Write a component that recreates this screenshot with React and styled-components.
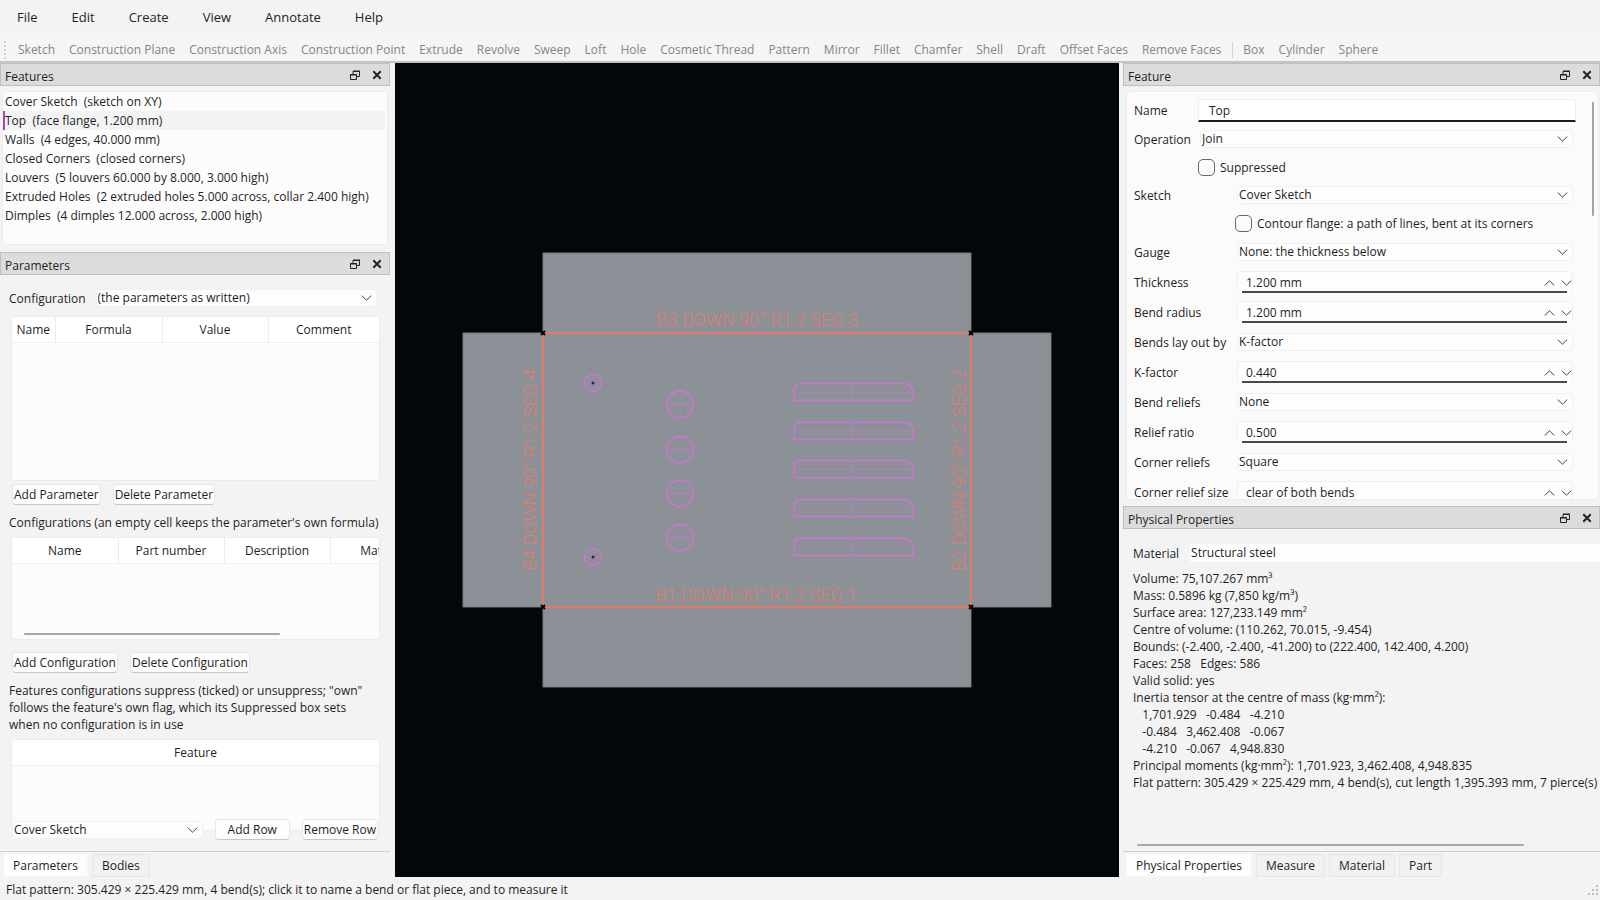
import React, { useState } from 'react';
import styled, { createGlobalStyle } from 'styled-components';

const GlobalStyle = createGlobalStyle`
  * { box-sizing: border-box; }
  body {
    margin: 0;
    background: #f3f3f3;
    color: #1f1f1f;
    font-family: 'Open Sans', 'Noto Sans', sans-serif;
    font-size: 12px;
    line-height: 17px;
  }
  button, input, select {
    font: inherit;
    color: inherit;
    margin: 0;
  }
`;

const Window = styled.div`
  display: flex;
  flex-direction: column;
  height: 100vh;
  min-height: 760px;
  overflow: hidden;
`;

const MenuBar = styled.nav`
  display: flex;
  gap: 34px;
  align-items: center;
  height: 35px;
  padding: 0 17px;
`;

const MenuButton = styled.button`
  background: none;
  border: none;
  padding: 0;
  font-size: 13px;
`;

const ToolBar = styled.div`
  display: flex;
  align-items: center;
  gap: 14px;
  height: 28px;
  padding: 2px 0 0 4px;
  background: #f5f5f5;
  border-top: 1px solid #f8f8f8;
  border-bottom: 2px solid #c3c3c3;
  white-space: nowrap;
`;

const ToolButton = styled.button`
  background: none;
  border: none;
  padding: 0;
  color: #858585;
`;

const ToolHandle = styled.span`
  width: 0;
  height: 18px;
  border-left: 2px dotted #d4d4d4;
  margin-right: -2px;
`;

const ToolSeparator = styled.span`
  width: 1px;
  height: 16px;
  background: #d6d6d6;
  margin: 0 -4px 0 -3px;
`;

const Main = styled.main`
  flex: 1;
  min-height: 0;
  display: grid;
  grid-template-columns: 390px minmax(0, 1fr) 477px;
`;

const DockArea = styled.div`
  display: flex;
  flex-direction: column;
  min-width: 0;
  min-height: 0;
`;

const Dock = styled.section`
  display: flex;
  flex-direction: column;
  min-height: 0;
  flex: ${props => props.$grow ? '1 1 0' : '0 0 auto'};
`;

const DockTitle = styled.header`
  display: flex;
  align-items: center;
  flex: none;
  height: 23px;
  padding: 3px 7px 0 4px;
  background: #dcdcdc;
  border: 1px solid #bfbfbf;
`;

const DockName = styled.h2`
  flex: 1;
  margin: 0;
  font-size: 12px;
  font-weight: 400;
`;

const TitleButton = styled.button`
  display: flex;
  background: none;
  border: none;
  padding: 0 0 2px;
  margin-left: 12px;
`;

const FeatureList = styled.ul`
  list-style: none;
  margin: 5px 2px 7px;
  padding: 0;
  height: 154px;
  background: #fcfcfc;
  border: 1px solid #ececec;
  border-radius: 4px;
`;

const FeatureItem = styled.li`
  height: 19px;
  line-height: 19px;
  padding-left: ${props => props.$selected ? '0' : '2px'};
  margin-right: 2px;
  white-space: pre;
  background: ${props => props.$selected ? '#f3f3f3' : 'none'};
  border-left: ${props => props.$selected ? '2px solid #a349b8' : 'none'};
`;

const ParamBody = styled.div`
  flex: 1;
  min-height: 0;
  display: flex;
  flex-direction: column;
  padding: 14px 10px 11px 9px;
`;

const ParamHead = styled.div`
  display: flex;
  align-items: center;
  gap: 10px;
  padding-right: 3px;
  margin-bottom: 9px;
`;

const SelectBox = styled.span`
  position: relative;
  display: block;
  flex: 1;
  margin: ${props => props.$inset ? '0 3px 0 2px' : '0'};

  svg {
    position: absolute;
    right: 5px;
    top: 6px;
    pointer-events: none;
  }
`;

const Select = styled.select`
  appearance: none;
  display: block;
  width: 100%;
  height: 18px;
  padding: 0 20px 0 1px;
  line-height: 16px;
  background: #fdfdfd;
  border: 1px solid #f0f0f0;
  border-radius: 4px;
  outline: none;
`;

const TableFrame = styled.div`
  flex: ${props => props.$grow ? '1 1 0' : '0 0 auto'};
  height: ${props => props.$height ? `${props.$height}px` : 'auto'};
  margin-left: 2px;
  overflow: hidden;
  background: #fcfcfc;
  border: 1px solid #ececec;
  border-radius: 4px;
  display: flex;
  flex-direction: column;
  justify-content: space-between;
`;

const Table = styled.table`
  border-collapse: collapse;
  table-layout: fixed;
  width: ${props => props.$width};

  th {
    height: 25px;
    padding: 0;
    font-weight: 400;
    background: #fff;
    border-right: 1px solid #ececec;
    border-bottom: 1px solid #f1f1f1;
  }
  th:last-child { border-right: none; }
`;

const HScroll = styled.div`
  width: ${props => props.$width};
  height: 2px;
  margin: ${props => props.$margin};
  flex: none;
  background: #a9a9a9;
  border-radius: 1px;
`;

const ButtonRow = styled.div`
  display: flex;
  align-items: center;
  gap: 12px;
  position: relative;
  margin: ${props => props.$margin};
  padding: 0 2px 0 3px;
`;

const Button = styled.button`
  height: 21px;
  min-width: ${props => props.$min || 0}px;
  padding: 0 1px 1px;
  white-space: nowrap;
  background: #fdfdfd;
  border: 1px solid #e6e6e6;
  border-bottom-color: #c6c6c6;
  border-radius: 4px;
`;

const Note = styled.p`
  margin: 0 0 6px;
  white-space: ${props => props.$nowrap ? 'nowrap' : 'normal'};
`;

const TabBar = styled.div`
  display: flex;
  flex: none;
  align-items: flex-start;
  gap: 4px;
  height: 26px;
  padding: 2px 3px 0;
  border-top: 1px solid #cfcfcf;
`;

const Tab = styled.button`
  height: 23px;
  padding: 0 9px;
  background: ${props => props.$active ? '#fdfdfd' : '#f1f1f1'};
  border: 1px solid ${props => props.$active ? '#f7f7f7' : '#e6e6e6'};
`;

const Viewport = styled.div`
  margin: 0 4px 0 5px;
  background: #03070a;
  min-width: 0;
  min-height: 0;

  svg {
    display: block;
    width: 100%;
    height: 100%;
  }
`;

const FeatureForm = styled.form`
  position: relative;
  height: 409px;
  margin: 5px 1px 6px 3px;
  padding: 4px 22px 0 7px;
  overflow: hidden;
  background: #fbfbfb;
  border: 1px solid #ededed;
  border-radius: 4px;
`;

const FormRow = styled.div`
  display: grid;
  grid-template-columns: ${props => props.$wide ? '101px' : '64px'} minmax(0, 1fr);
  align-items: center;
  height: ${props => props.$height || 28}px;
`;

const NameInput = styled.input`
  width: 100%;
  height: 23px;
  padding: 0 10px;
  background: #fff;
  border: 1px solid #efefef;
  border-bottom: 2px solid #1c1c1c;
  border-radius: 4px 4px 0 0;
  outline: none;
`;

const CheckLine = styled.label`
  display: flex;
  grid-column: 2;
  align-items: center;
  gap: 5px;
`;

const CheckInput = styled.input`
  appearance: none;
  width: 17px;
  height: 17px;
  border: 1px solid #666;
  border-radius: 5px;
  background: #fbfbfb;

  &:checked { background: #a349b8; }
`;

const SpinBox = styled.span`
  display: flex;
  align-items: center;
  height: 22px;
  margin: 0 3px 0 2px;
  background:
    linear-gradient(#4a4a4a, #4a4a4a) 4px 100% / calc(100% - 9px) 2px no-repeat,
    #fdfdfd;
  border: 1px solid #efefef;
  border-bottom: none;
  border-radius: 4px;

  input {
    flex: 1;
    min-width: 0;
    padding: 0 8px;
    border: none;
    background: none;
    outline: none;
  }
  button {
    display: flex;
    padding: 0;
    margin-left: 6px;
    border: none;
    background: none;
  }
`;

const VScroll = styled.div`
  position: absolute;
  right: 4px;
  top: 10px;
  width: 2px;
  height: 114px;
  background: #a4a4a4;
  border-radius: 1px;
`;

const PhysBody = styled.div`
  flex: 1;
  min-height: 0;
  display: flex;
  flex-direction: column;
  overflow: hidden;
  padding: 15px 0 0 10px;
`;

const MaterialRow = styled.div`
  display: flex;
  align-items: center;
  gap: 11px;
  margin-bottom: 8px;

  select {
    border: none;
    border-radius: 0;
  }
`;

const Readout = styled.div`
  flex: 1;
  white-space: pre;
`;

const StatusBar = styled.footer`
  display: flex;
  align-items: center;
  justify-content: space-between;
  flex: none;
  height: 23px;
  padding: 2px 2px 0 6px;
`;

const ChevronDown = () => (
  <svg width="11" height="6" viewBox="0 0 11 6" fill="none" stroke="#444">
    <path d="M0.7 0.6 L5.5 5.2 L10.3 0.6" />
  </svg>
);

const ChevronUp = () => (
  <svg width="11" height="6" viewBox="0 0 11 6" fill="none" stroke="#444">
    <path d="M0.7 5.4 L5.5 0.8 L10.3 5.4" />
  </svg>
);

const FloatIcon = () => (
  <svg width="10" height="11" viewBox="0 0 10 11" fill="none" stroke="#222">
    <path d="M3 5 V1.5 H9.5 V6.5 H7 M3 1 H10" />
    <path d="M0.5 4.5 H6.5 V9.5 H0.5 Z M0 5 H7" />
  </svg>
);

const CloseIcon = () => (
  <svg width="10" height="10" viewBox="0 0 10 10" stroke="#222" strokeWidth="2">
    <path d="M1.3 1.3 L8.7 8.7 M8.7 1.3 L1.3 8.7" />
  </svg>
);

const Grip = () => (
  <svg width="10" height="10" viewBox="0 0 10 10" fill="#bdbdbd">
    <path d="M8 0h2v2h-2z M8 4h2v2h-2z M4 4h2v2h-2z M8 8h2v2h-2z M4 8h2v2h-2z M0 8h2v2h-2z" />
  </svg>
);

const menus = ['File', 'Edit', 'Create', 'View', 'Annotate', 'Help'];

const tools = [
  'Sketch', 'Construction Plane', 'Construction Axis', 'Construction Point', 'Extrude', 'Revolve',
  'Sweep', 'Loft', 'Hole', 'Cosmetic Thread', 'Pattern', 'Mirror', 'Fillet', 'Chamfer', 'Shell',
  'Draft', 'Offset Faces', 'Remove Faces',
];

const solids = ['Box', 'Cylinder', 'Sphere'];

const features = [
  'Cover Sketch  (sketch on XY)',
  'Top  (face flange, 1.200 mm)',
  'Walls  (4 edges, 40.000 mm)',
  'Closed Corners  (closed corners)',
  'Louvers  (5 louvers 60.000 by 8.000, 3.000 high)',
  'Extruded Holes  (2 extruded holes 5.000 across, collar 2.400 high)',
  'Dimples  (4 dimples 12.000 across, 2.000 high)',
];

const flangeFields = [
  { id: 'thickness', label: 'Thickness', value: '1.200 mm', spin: true },
  { id: 'radius', label: 'Bend radius', value: '1.200 mm', spin: true },
  { id: 'layout', label: 'Bends lay out by', value: 'K-factor' },
  { id: 'kfactor', label: 'K-factor', value: '0.440', spin: true },
  { id: 'reliefs', label: 'Bend reliefs', value: 'None' },
  { id: 'ratio', label: 'Relief ratio', value: '0.500', spin: true },
  { id: 'corners', label: 'Corner reliefs', value: 'Square' },
  { id: 'cornersize', label: 'Corner relief size', value: 'clear of both bends', spin: true },
];

const readout = [
  'Volume: 75,107.267 mm³',
  'Mass: 0.5896 kg (7,850 kg/m³)',
  'Surface area: 127,233.149 mm²',
  'Centre of volume: (110.262, 70.015, -9.454)',
  'Bounds: (-2.400, -2.400, -41.200) to (222.400, 142.400, 4.200)',
  'Faces: 258   Edges: 586',
  'Valid solid: yes',
  'Inertia tensor at the centre of mass (kg·mm²):',
  '   1,701.929   -0.484   -4.210',
  '   -0.484   3,462.408   -0.067',
  '   -4.210   -0.067   4,948.830',
  'Principal moments (kg·mm²): 1,701.923, 3,462.408, 4,948.835',
  'Flat pattern: 305.429 × 225.429 mm, 4 bend(s), cut length 1,395.393 mm, 7 pierce(s)',
];

function Combo({ id, value, inset, plain, label }) {
  return (
    <SelectBox $inset={inset}>
      <Select id={id} defaultValue={value} aria-label={label}>
        <option>{value}</option>
      </Select>
      {!plain && <ChevronDown />}
    </SelectBox>
  );
}

function Spin({ id, value }) {
  return (
    <SpinBox>
      <input id={id} type="text" defaultValue={value} />
      <button type="button" aria-label="Increase"><ChevronUp /></button>
      <button type="button" aria-label="Decrease"><ChevronDown /></button>
    </SpinBox>
  );
}

function Title({ children }) {
  return (
    <DockTitle>
      <DockName>{children}</DockName>
      <TitleButton type="button" aria-label="Float"><FloatIcon /></TitleButton>
      <TitleButton type="button" aria-label="Close"><CloseIcon /></TitleButton>
    </DockTitle>
  );
}

function Tabs({ names }) {
  const [active, setActive] = useState(names[0]);
  return (
    <TabBar role="tablist">
      {names.map(name => (
        <Tab
          key={name}
          type="button"
          role="tab"
          aria-selected={name === active}
          $active={name === active}
          onClick={() => setActive(name)}
        >
          {name}
        </Tab>
      ))}
    </TabBar>
  );
}

// Unfolded sheet: faces, bend lines with their notes, and the formed features
function FlatPattern() {
  const holes = [320, 494];
  const dimples = [341, 386, 430, 474];
  const louvers = [321, 360, 398, 437, 476];
  const corners = [[148, 270], [576, 270], [148, 544], [576, 544]];

  return (
    <svg viewBox="0 0 724 814" role="img" aria-label="Flat pattern">
      <path
        d="M148 190 H576 V270 H656 V544 H576 V624 H148 V544 H68 V270 H148 Z"
        fill="#8b9197"
        stroke="#777c80"
      />
      <rect x="148" y="270" width="428" height="274" fill="none" stroke="#e67a68" strokeWidth="2" />

      <g fill="#df7d6d" fontFamily="Roboto, sans-serif" fontSize="18" fontWeight="300" textAnchor="middle">
        <text x="362" y="263">B3 DOWN 90° R1.2 SEQ 3</text>
        <text x="361" y="538">B1 DOWN 90° R1.2 SEQ 1</text>
        <text transform="translate(141 407) rotate(-90)">B4 DOWN 90° R1.2 SEQ 4</text>
        <text transform="translate(570 407) rotate(-90)">B2 DOWN 90° R1.2 SEQ 2</text>
      </g>

      <g fill="none" stroke="#cf73d6">
        {holes.map(y => (
          <g key={y}>
            <circle cx="198" cy={y} r="8.5" strokeWidth="1.4" />
            <path d={`M190 ${y + 0.5} H206 M198.5 ${y - 8} V${y + 8}`} opacity="0.4" />
            <circle cx="198" cy={y} r="1.5" fill="#3d2345" stroke="none" />
          </g>
        ))}
        {dimples.map(y => (
          <g key={y}>
            <circle cx="285" cy={y + 0.5} r="13.2" strokeWidth="1.4" />
            <path d={`M272 ${y + 0.5} H298`} opacity="0.8" />
            <path d={`M285.5 ${y - 12} V${y + 13}`} opacity="0.3" />
          </g>
        ))}
        {louvers.map(y => (
          <g key={y}>
            <path d={`M399 ${y + 16.5} V${y + 5} Q400 ${y} 405 ${y - 0.5} H511 Q516 ${y + 1} 518 ${y + 7} V${y + 16.5} Z`} strokeWidth="1.4" />
            <path d={`M399 ${y + 8.5} H518 M457.5 ${y} V${y + 17}`} opacity="0.6" />
          </g>
        ))}
      </g>

      <g stroke="#050505" strokeWidth="2">
        {corners.map(([x, y]) => (
          <path key={`${x}-${y}`} d={`M${x - 2} ${y - 2} l4 4 M${x + 2} ${y - 2} l-4 4`} />
        ))}
      </g>
    </svg>
  );
}

function LeftDocks() {
  return (
    <DockArea>
      <Dock>
        <Title>Features</Title>
        <FeatureList>
          {features.map((text, i) => (
            <FeatureItem key={text} $selected={i === 1}>{text}</FeatureItem>
          ))}
        </FeatureList>
      </Dock>
      <Dock $grow>
        <Title>Parameters</Title>
        <ParamBody>
          <ParamHead>
            <label htmlFor="configuration">Configuration</label>
            <Combo id="configuration" value="(the parameters as written)" />
          </ParamHead>

          <TableFrame $grow>
            <Table $width="100%">
              <colgroup>
                <col width="43" /><col width="107" /><col width="106" /><col />
              </colgroup>
              <thead>
                <tr><th>Name</th><th>Formula</th><th>Value</th><th>Comment</th></tr>
              </thead>
            </Table>
          </TableFrame>
          <ButtonRow $margin="3px 0 9px">
            <Button type="button">Add Parameter</Button>
            <Button type="button">Delete Parameter</Button>
          </ButtonRow>

          <Note $nowrap>Configurations (an empty cell keeps the parameter's own formula)</Note>
          <TableFrame $height={103}>
            <Table $width="424px">
              <thead>
                <tr><th>Name</th><th>Part number</th><th>Description</th><th>Material</th></tr>
              </thead>
            </Table>
            <HScroll $width="256px" $margin="0 0 4px 12px" />
          </TableFrame>
          <ButtonRow $margin="12px 0 9px">
            <Button type="button">Add Configuration</Button>
            <Button type="button">Delete Configuration</Button>
          </ButtonRow>

          <Note>
            Features configurations suppress (ticked) or unsuppress; "own"
            follows the feature's own flag, which its Suppressed box sets
            when no configuration is in use
          </Note>
          <TableFrame $height={92}>
            <Table $width="100%">
              <thead>
                <tr><th>Feature</th></tr>
              </thead>
            </Table>
          </TableFrame>
          <ButtonRow $margin="-12px 0 0">
            <Combo id="rowfeature" value="Cover Sketch" label="Feature" />
            <Button type="button" $min={75}>Add Row</Button>
            <Button type="button">Remove Row</Button>
          </ButtonRow>
        </ParamBody>
        <Tabs names={['Parameters', 'Bodies']} />
      </Dock>
    </DockArea>
  );
}

function RightDocks() {
  return (
    <DockArea>
      <Dock>
        <Title>Feature</Title>
        <FeatureForm onSubmit={e => e.preventDefault()}>
          <FormRow $height={29}>
            <label htmlFor="name">Name</label>
            <NameInput id="name" type="text" defaultValue="Top" />
          </FormRow>
          <FormRow>
            <label htmlFor="operation">Operation</label>
            <Combo id="operation" value="Join" inset />
          </FormRow>
          <FormRow>
            <CheckLine><CheckInput type="checkbox" />Suppressed</CheckLine>
          </FormRow>
          <FormRow $wide>
            <label htmlFor="sketch">Sketch</label>
            <Combo id="sketch" value="Cover Sketch" inset />
          </FormRow>
          <FormRow $wide>
            <CheckLine><CheckInput type="checkbox" />Contour flange: a path of lines, bent at its corners</CheckLine>
          </FormRow>
          <FormRow $wide $height={30}>
            <label htmlFor="gauge">Gauge</label>
            <Combo id="gauge" value="None: the thickness below" inset />
          </FormRow>
          {flangeFields.map(field => (
            <FormRow key={field.id} $wide $height={30}>
              <label htmlFor={field.id}>{field.label}</label>
              {field.spin
                ? <Spin id={field.id} value={field.value} />
                : <Combo id={field.id} value={field.value} inset />}
            </FormRow>
          ))}
          <VScroll />
        </FeatureForm>
      </Dock>
      <Dock $grow>
        <Title>Physical Properties</Title>
        <PhysBody>
          <MaterialRow>
            <label htmlFor="material">Material</label>
            <Combo id="material" value="Structural steel" plain />
          </MaterialRow>
          <Readout>
            {readout.map(line => <div key={line}>{line}</div>)}
          </Readout>
          <HScroll $width="387px" $margin="0 0 5px 4px" />
        </PhysBody>
        <Tabs names={['Physical Properties', 'Measure', 'Material', 'Part']} />
      </Dock>
    </DockArea>
  );
}

function App() {
  return (
    <>
      <GlobalStyle />
      <Window>
        <MenuBar>
          {menus.map(name => <MenuButton key={name} type="button">{name}</MenuButton>)}
        </MenuBar>
        <ToolBar>
          <ToolHandle />
          {tools.map(name => <ToolButton key={name} type="button">{name}</ToolButton>)}
          <ToolSeparator />
          {solids.map(name => <ToolButton key={name} type="button">{name}</ToolButton>)}
        </ToolBar>
        <Main>
          <LeftDocks />
          <Viewport>
            <FlatPattern />
          </Viewport>
          <RightDocks />
        </Main>
        <StatusBar>
          <span>Flat pattern: 305.429 × 225.429 mm, 4 bend(s); click it to name a bend or flat piece, and to measure it</span>
          <Grip />
        </StatusBar>
      </Window>
    </>
  );
}

export default App;
